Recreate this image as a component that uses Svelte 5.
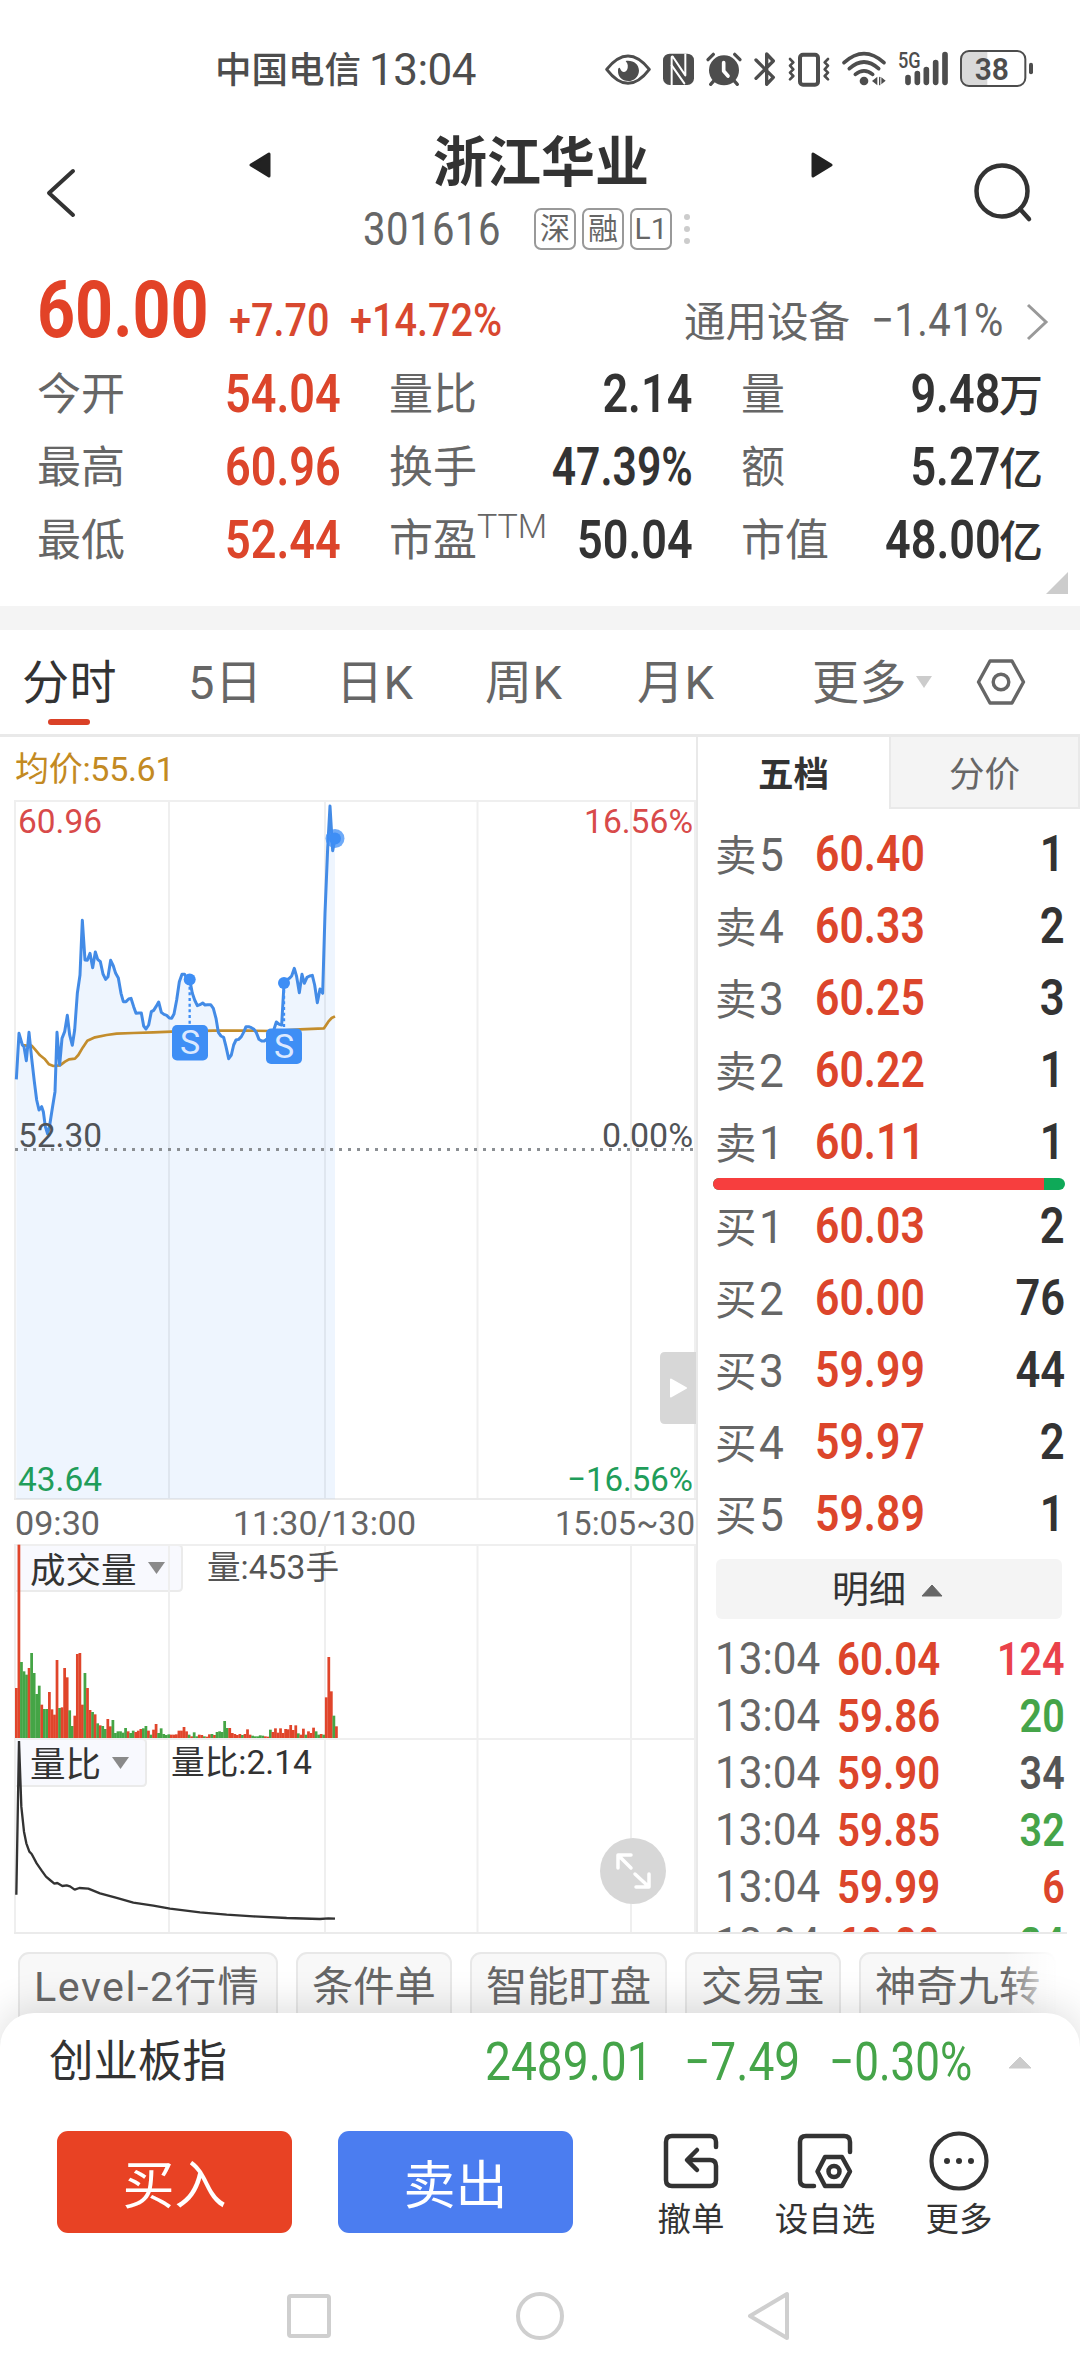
<script lang="ts">
	type Quote = { label: string; price: string; qty: string };

	const stats = [
		{ label: "今开", value: "54.04", unit: "", up: true },
		{ label: "量比", value: "2.14", unit: "", up: false },
		{ label: "量", value: "9.48", unit: "万", up: false },
		{ label: "最高", value: "60.96", unit: "", up: true },
		{ label: "换手", value: "47.39%", unit: "", up: false },
		{ label: "额", value: "5.27", unit: "亿", up: false },
		{ label: "最低", value: "52.44", unit: "", up: true },
		{ label: "市盈", sup: "TTM", value: "50.04", unit: "", up: false },
		{ label: "市值", value: "48.00", unit: "亿", up: false },
	];

	const asks: Quote[] = [
		{ label: "卖5", price: "60.40", qty: "1" },
		{ label: "卖4", price: "60.33", qty: "2" },
		{ label: "卖3", price: "60.25", qty: "3" },
		{ label: "卖2", price: "60.22", qty: "1" },
		{ label: "卖1", price: "60.11", qty: "1" },
	];

	const bids: Quote[] = [
		{ label: "买1", price: "60.03", qty: "2" },
		{ label: "买2", price: "60.00", qty: "76" },
		{ label: "买3", price: "59.99", qty: "44" },
		{ label: "买4", price: "59.97", qty: "2" },
		{ label: "买5", price: "59.89", qty: "1" },
	];

	const ticks = [
		{ price: "60.04", qty: "124", tone: "hot" },
		{ price: "59.86", qty: "20", tone: "down" },
		{ price: "59.90", qty: "34", tone: "flat" },
		{ price: "59.85", qty: "32", tone: "down" },
		{ price: "59.99", qty: "6", tone: "up" },
		{ price: "60.00", qty: "24", tone: "down" },
	];

	const askShare = 94;

	// one point per minute, three units per pixel
	const priceLine =
		"49,898 57,760 67,795 72,800 79,842 87,757 95,835 103,905 110,960 117,990 125,980 130,995 136,1040 143,1062 150,1030 157,985 165,935 171,757 179,855 186,775 194,755 202,706 209,765 217,796 224,750 232,640 240,585 247,421 255,540 262,541 270,520 278,563 286,516 293,538 301,545 309,582 317,598 324,590 332,541 340,558 347,580 355,594 363,640 370,665 378,665 386,657 393,655 401,680 408,700 416,699 424,699 431,738 438,747 446,735 454,695 461,691 468,680 476,666 484,697 492,703 500,706 508,714 515,715 522,702 530,660 538,605 546,583 554,583 562,598 569,598 577,640 584,660 592,677 600,674 608,669 615,675 623,674 632,674 640,685 648,715 655,757 663,768 671,772 678,800 686,836 694,825 701,795 708,780 716,778 724,770 732,755 738,740 746,740 754,743 762,748 769,758 777,778 785,783 793,783 800,778 808,776 815,770 823,745 829,726 838,733 845,735 852,612 860,600 868,595 875,588 883,565 890,590 898,638 906,583 913,610 921,592 929,588 937,586 944,615 952,668 960,627 968,640 975,400 983,205 990,78 998,212 1005,176";
	const avgLine =
		"67,795 80,797 95,797 105,808 120,826 135,838 147,853 160,858 180,856 195,845 207,838 225,836 235,825 248,803 262,782 285,772 320,765 350,761 400,759 460,757 515,755 640,752 740,752 820,753 900,748 972,745 985,725 995,714 1005,709";
	const ratioLine =
		"49,1244 57,783 64,980 72,1055 79,1090 88,1115 95,1122 110,1150 125,1172 138,1190 150,1200 163,1211 172,1209 187,1218 200,1216 210,1219 224,1229 238,1224 265,1226 300,1240 350,1254 400,1268 460,1277 510,1286 600,1297 680,1304 760,1309 860,1314 960,1317 985,1315 1005,1316";

	const volumes =
		"150r 580r 228g 200g 190g 210r 255g 195g 132g 157g 100r 87g 87g 138r 86r 70r 234r 90g 92r 210r 182r 83g 36g 67r 252r 255r 100r 195g 150r 84r 78g 71r 44g 38r 36g 27g 57r 35r 54g 15g 20g 20g 16g 30g 20r 15g 22g 18r 22r 27r 29g 36g 22r 10g 25r 42r 15g 29g 12g 9g 11g 10r 10r 11r 22r 22r 33r 20r 10g 5r 17g 5g 10r 9r 5g 4r 11r 12g 9r 18g 20g 18g 51g 30g 30r 15r 12r 9r 12r 9g 12r 26r 10r 7g 5g 5g 8g 7g 5r 4r 25g 18r 29r 16r 29r 15r 27r 26r 39r 24r 38r 14g 10r 28r 10g 20r 15r 31r 20g 10g 12r 10g 122r 243r 140r 67g 35r"
			.split(" ")
			.map((v) => ({ h: parseInt(v) / 3, up: v.endsWith("r") }));

	const columns = [169, 325, 477.5, 631];
	const chips = ["Level-2行情", "条件单", "智能盯盘", "交易宝", "神奇九转"];
	const badges = ["深", "融", "L1"];
</script>

{#snippet grid(height: number)}
	<g stroke="#efefef" stroke-width="2">
		{#each columns as x}
			<line x1={x} y1="0" x2={x} y2={height} />
		{/each}
		<line x1="15" y1="0" x2="15" y2={height} />
		<line x1="695" y1="0" x2="695" y2={height} />
		<line x1="14" y1="1" x2="696" y2="1" />
	</g>
{/snippet}

{#snippet quoteRow(q: Quote)}
	<div class="quote">
		<span class="q-label">{q.label[0]}<span class="n left">{q.label[1]}</span></span>
		<span class="q-price n left">{q.price}</span>
		<span class="q-qty n right">{q.qty}</span>
	</div>
{/snippet}

<div class="page">
	<div class="status">
		<span class="carrier">中国电信</span>
		<span class="clock">13:04</span>
		<svg width="480" height="80" viewBox="0 0 1440 240" fill="none" stroke="#4d4d4d" stroke-linecap="round" stroke-linejoin="round">
			<path d="M80 118 Q144 38 208 118 Q144 202 80 118Z" stroke-width="9" />
			<path d="M137 93 C160 90 176 102 177 122 C176 140 162 153 145 153 C126 153 113 139 114 122 C114 112 119 111 121 117 C126 130 140 128 143 114 C145 103 140 97 137 93Z" fill="#4d4d4d" stroke="none" />
			<rect x="249" y="71" width="93" height="94" rx="20" fill="#4d4d4d" stroke="none" />
			<path d="M275 165 V82 Q276 76 281 84 L316 136 V71" stroke="#fff" stroke-width="6" stroke-linecap="butt" />
			<path d="M275 106 L313 160" stroke="#fff" stroke-width="6" />
			<circle cx="432" cy="121" r="45" fill="#4d4d4d" stroke="none" />
			<path d="M384 89 L400 73 M464 73 L480 89 M402 152 L392 163 M462 152 L472 163" stroke-width="10" />
			<path d="M431 98 V123 L444 138" stroke="#fff" stroke-width="11" />
			<path d="M528 90 L580 142 L560 163 V72 L580 93 L528 145" stroke-width="10" />
			<rect x="660" y="74" width="54" height="90" rx="9" stroke-width="12" />
			<path d="M630 87 L640 97 L630 107 L640 118 L630 128 L640 138 L630 148 M744 87 L734 97 L744 107 L734 118 L744 128 L734 138 L744 148" stroke-width="8" />
			<path d="M792 98 Q852 44 912 98 M808 116 Q852 76 896 116 M826 133 Q852 112 878 133" stroke-width="11" />
			<circle cx="852" cy="153" r="13" fill="#4d4d4d" stroke="none" />
			<path d="M876 153 L892 140 V166Z M904 142 L917 152 L904 163Z" fill="#4d4d4d" stroke="none" />
			<path d="M899 142 V164" stroke-width="4" />
			<text x="954" y="113" class="g5" textLength="68" lengthAdjust="spacingAndGlyphs">5G</text>
			<path d="M984 143 V157 M1012 131 V157 M1039 119 V157 M1067 98 V157 M1095 74 V157" stroke-width="17" />
			<path d="M1222 62 V169 H1165 Q1144 169 1144 148 V83 Q1144 62 1165 62Z" fill="#d9d9d9" stroke="none" />
			<rect x="1143" y="63" width="193" height="105" rx="24" stroke-width="6" />
			<path d="M1353 104 V127" stroke-width="12" />
			<text x="1184" y="149" class="battery" textLength="103" lengthAdjust="spacingAndGlyphs">38</text>
		</svg>
	</div>

	<header>
		<svg class="back" width="34" height="52" viewBox="0 0 34 52"><path d="M29 4 L5 26 L29 48" fill="none" stroke="#333" stroke-width="4" stroke-linecap="round" stroke-linejoin="round" /></svg>
		<svg class="prev" width="22" height="28" viewBox="0 0 22 28"><path d="M2 14 L20 3 V25Z" fill="#222" stroke="#222" stroke-width="3" stroke-linejoin="round" /></svg>
		<div class="title">
			<h1>浙江华业</h1>
			<div class="code">
				<span class="code-num"><span class="n left">301616</span></span>
				{#each badges as b}
					<span class="badge">{b}</span>
				{/each}
				<span class="dots"><i></i><i></i><i></i></span>
			</div>
		</div>
		<svg class="next" width="22" height="28" viewBox="0 0 22 28"><path d="M20 14 L2 3 V25Z" fill="#222" stroke="#222" stroke-width="3" stroke-linejoin="round" /></svg>
		<svg class="search" width="60" height="62" viewBox="0 0 60 62" fill="none" stroke="#333" stroke-width="4.5" stroke-linecap="round"><circle cx="29" cy="29" r="25.5" /><path d="M47 47 L56 57" /></svg>
	</header>

	<section class="summary">
		<div class="headline">
			<span class="last n left">60.00</span>
			<span class="chg n left">+7.70</span>
			<span class="chg n left">+14.72%</span>
			<span class="sector">通用设备</span>
			<span class="sector-chg n left">−1.41%</span>
			<svg width="26" height="42" viewBox="0 0 26 42"><path d="M4 4 L22 21 L4 38" fill="none" stroke="#999" stroke-width="3" /></svg>
		</div>
		<div class="stats">
			{#each stats as s}
				<div class="stat">
					<span class="s-label">{s.label}{#if s.sup}<em>{s.sup}</em>{/if}</span>
					<span class="s-value" class:up={s.up}><span class="n right" class:pct={s.value.endsWith("%")}>{s.value}</span>{s.unit}</span>
				</div>
			{/each}
		</div>
		<svg class="corner" width="22" height="22" viewBox="0 0 22 22"><path d="M22 0 V22 H0Z" fill="#ccc" /></svg>
	</section>

	<nav class="tabs">
		<span class="tab active">分时</span>
		<span class="tab">5日</span>
		<span class="tab">日K</span>
		<span class="tab">周K</span>
		<span class="tab">月K</span>
		<span class="tab">更多</span>
		<svg width="16" height="12" viewBox="0 0 16 12"><path d="M0 0 H16 L8 12Z" fill="#ccc" /></svg>
		<svg class="hex" width="50" height="48" viewBox="0 0 50 48" fill="none" stroke="#666" stroke-width="3.4" stroke-linejoin="round"><path d="M14 3 H36 L47.5 24 L36 45 H14 L2.5 24Z" /><circle cx="25" cy="24" r="7.8" /></svg>
	</nav>

	<main>
		<div class="charts">
			<div class="avg">均价:55.61</div>
			<svg width="696" height="700" viewBox="0 0 696 700">
				{@render grid(700)}
				<line x1="14" y1="699" x2="696" y2="699" stroke="#ebebeb" stroke-width="2" />
				<g transform="translate(0 -20) scale(0.33333)" fill="none" stroke-linejoin="round">
					<polygon points="49,2156 {priceLine} 1005,2156" fill="#3f8cf0" fill-opacity="0.09" />
					<polyline points={avgLine} stroke="#c38d2d" stroke-width="8" />
					<polyline points={priceLine} stroke="#438be6" stroke-width="9" />
					<path d="M569 620 V735 M852 630 V745" stroke="#3e8ef5" stroke-width="7" stroke-dasharray="9 8" />
				</g>
				<g fill="#3e8ef5">
					<circle cx="335" cy="38.5" r="9.5" fill-opacity="0.75" />
					<circle cx="335" cy="38.5" r="6" />
					<circle cx="189.7" cy="179.5" r="6" />
					<circle cx="284" cy="183" r="6" />
					<rect x="172" y="225" width="36" height="35.5" rx="5" />
					<rect x="266" y="228.5" width="36" height="35.5" rx="5" />
				</g>
				<text x="190" y="254" class="mark">S</text>
				<text x="284" y="258" class="mark">S</text>
				<line x1="15" y1="349.5" x2="694" y2="349.5" stroke="#8b8f93" stroke-width="3" stroke-dasharray="3 6" />
				<g class="axis">
					<text x="18" y="33" fill="#d84a4a" textLength="84" lengthAdjust="spacingAndGlyphs">60.96</text>
					<text x="584" y="33" fill="#d84a4a" textLength="109" lengthAdjust="spacingAndGlyphs">16.56%</text>
					<text x="18" y="347" fill="#505357" textLength="84" lengthAdjust="spacingAndGlyphs">52.30</text>
					<text x="602" y="347" fill="#505357" textLength="91" lengthAdjust="spacingAndGlyphs">0.00%</text>
					<text x="18" y="691" fill="#1f9d5a" textLength="84" lengthAdjust="spacingAndGlyphs">43.64</text>
					<text x="567" y="691" fill="#1f9d5a" textLength="126" lengthAdjust="spacingAndGlyphs">−16.56%</text>
				</g>
				<path d="M696 552 V624 H665 Q660 624 660 619 V557 Q660 552 665 552Z" fill="#d7d7d7" />
				<path d="M671 579.5 L686 588 L671 596.5Z" fill="#fff" stroke="#fff" stroke-width="2" stroke-linejoin="round" />
			</svg>
			<svg width="696" height="44" viewBox="0 0 696 44" class="axis" fill="#666">
				<text x="15" y="35" textLength="85" lengthAdjust="spacingAndGlyphs">09:30</text>
				<text x="233" y="35" textLength="183" lengthAdjust="spacingAndGlyphs">11:30/13:00</text>
				<text x="555" y="35" textLength="140" lengthAdjust="spacingAndGlyphs">15:05~30</text>
			</svg>
			<svg width="696" height="194" viewBox="0 0 696 194">
				<path d="M15 1 H178 Q182 1 182 5 V43 Q182 47 178 47 H15Z" fill="#f8f9fe" stroke="#ebebeb" stroke-width="2" />
				{@render grid(194)}
				{#each volumes as v, i}
					<rect x={15 + i * 2.54} y={194 - v.h} width="2.75" height={v.h} fill={v.up ? "#e0452b" : "#45a546"} />
				{/each}
				<text x="30" y="39" class="ind">成交量</text>
				<path d="M148 18 H165 L156.5 30Z" fill="#8a8a8a" />
				<text x="207" y="35" class="ind-val" fill="#555" textLength="132" lengthAdjust="spacingAndGlyphs">量:453手</text>
			</svg>
			<svg width="696" height="196" viewBox="0 0 696 196">
				<path d="M15 1 H142 Q146 1 146 5 V44 Q146 48 142 48 H15Z" fill="#f8f9fe" stroke="#ebebeb" stroke-width="2" />
				{@render grid(196)}
				<line x1="14" y1="195" x2="696" y2="195" stroke="#ebebeb" stroke-width="2" />
				<g transform="translate(0 -258) scale(0.33333)">
					<polyline points={ratioLine} fill="none" stroke="#333" stroke-width="7" stroke-linejoin="bevel" />
				</g>
				<text x="30" y="39" class="ind">量比</text>
				<path d="M112 19 H129 L120.5 31Z" fill="#8a8a8a" />
				<text x="171" y="36" class="ind-val" fill="#333" textLength="141" lengthAdjust="spacingAndGlyphs">量比:2.14</text>
				<circle cx="633" cy="133" r="33" fill="#d7d7d7" />
				<path d="M618 130 V117 H631 M618.5 117.5 L631 130 M649 136 V149 H636 M648.5 148.5 L635 136" fill="none" stroke="#fff" stroke-width="3.5" stroke-linecap="round" stroke-linejoin="round" />
			</svg>
		</div>

		<aside>
			<div class="book-tabs">
				<span class="on">五档</span>
				<span class="off">分价</span>
			</div>
			<div class="book">
				{#each asks as q}
					{@render quoteRow(q)}
				{/each}
			</div>
			<div class="balance"><div class="balance-ask" style="width: {askShare}%"></div></div>
			<div class="book bids">
				{#each bids as q}
					{@render quoteRow(q)}
				{/each}
			</div>
			<div class="detail">
				明细
				<svg width="22" height="13" viewBox="0 0 22 13"><path d="M11 1 L21 12 H1Z" fill="#666" stroke="#666" stroke-linejoin="round" /></svg>
			</div>
			<div class="ticks">
				{#each ticks as t}
					<div class="tick">
						<span class="t-time n left">13:04</span>
						<span class="t-price n left">{t.price}</span>
						<span class="t-qty n right {t.tone}">{t.qty}</span>
					</div>
				{/each}
			</div>
		</aside>
	</main>

	<div class="chips">
		{#each chips as c}
			<span class="chip">{c}</span>
		{/each}
	</div>

	<footer>
		<div class="index">
			<span class="i-name">创业板指</span>
			<span class="n left">2489.01</span>
			<span class="n left">−7.49</span>
			<span class="n left pct">−0.30%</span>
			<svg width="24" height="13" viewBox="0 0 24 13"><path d="M12 1 L23 12 H1Z" fill="#ccc" stroke="#ccc" stroke-linejoin="round" /></svg>
		</div>
		<div class="actions">
			<button class="buy">买入</button>
			<button class="sell">卖出</button>
			<div class="tool cancel">
				<svg width="60" height="60" viewBox="0 0 60 60" fill="none" stroke="#333" stroke-width="4.5" stroke-linecap="round" stroke-linejoin="round">
					<path d="M55 16 V11 Q55 5 49 5 H11 Q5 5 5 11 V49 Q5 55 11 55 H49 Q55 55 55 49 V35 Q55 29 49 29 H27 M36 19 L26 29 L36 39" />
				</svg>
				<span>撤单</span>
			</div>
			<div class="tool">
				<svg width="60" height="60" viewBox="0 0 60 60" fill="none" stroke="#333" stroke-width="4.5" stroke-linecap="round" stroke-linejoin="round">
					<path d="M55 21 V11 Q55 5 49 5 H11 Q5 5 5 11 V49 Q5 55 11 55 H19" />
					<path d="M30 26 H47 L55 40.5 L47 55 H30 L22.5 40.5Z" />
					<circle cx="39" cy="40.5" r="5.5" />
				</svg>
				<span>设自选</span>
			</div>
			<div class="tool">
				<svg width="60" height="60" viewBox="0 0 60 60"><circle cx="30" cy="30" r="27.5" fill="none" stroke="#333" stroke-width="4.2" /><g fill="#333"><circle cx="18" cy="30" r="3" /><circle cx="30" cy="30" r="3" /><circle cx="42" cy="30" r="3" /></g></svg>
				<span>更多</span>
			</div>
		</div>
		<div class="sysnav">
			<svg width="504" height="56" viewBox="0 0 504 56" fill="none" stroke="#cfcfcf" stroke-width="4" stroke-linejoin="round">
				<rect x="3" y="8" width="40" height="40" rx="2" />
				<circle cx="254" cy="28" r="22" />
				<path d="M501 6 V50 L464 28Z" />
			</svg>
		</div>
	</footer>
</div>

<style>
	:global(body) {
		background: #fff;
	}

	.page {
		width: 1080px;
		height: 2376px;
		overflow: hidden;
		display: flex;
		flex-direction: column;
		background: #fff;
		color: #333;
		font-family: Roboto, "Noto Sans CJK SC", sans-serif;
		line-height: 1;
		white-space: nowrap;
	}

	svg {
		display: block;
		flex-shrink: 0;
	}

	/* condensed figures */
	.n {
		display: inline-block;
		transform: scaleX(0.87);
	}

	.left {
		transform-origin: left;
	}

	.right {
		transform-origin: right;
	}

	.status {
		height: 110px;
		display: flex;
		align-items: center;
		padding: 30px 0 0 215px;
		box-sizing: border-box;
		color: #4d4d4d;
	}

	.carrier {
		width: 154px;
		padding-top: 2px;
		font-size: 36.5px;
		font-weight: 500;
	}

	.clock {
		width: 211px;
		font-size: 44px;
		letter-spacing: -0.5px;
	}

	.g5 {
		font-size: 66px;
		font-weight: 500;
		fill: #4d4d4d;
		stroke: none;
	}

	.battery {
		font-size: 94px;
		font-weight: 600;
		fill: #4d4d4d;
		stroke: none;
	}

	header {
		height: 150px;
		display: flex;
		align-items: flex-start;
	}

	.back {
		margin: 57px 0 0 44px;
	}

	.prev {
		margin: 41px 0 0 171px;
	}

	.title {
		width: 540px;
		padding-top: 27px;
	}

	h1 {
		margin: 0;
		font-size: 54px;
		font-weight: 700;
		text-align: center;
	}

	.code {
		display: flex;
		align-items: center;
		height: 44px;
		margin-top: 16px;
		padding-left: 92px;
		color: #666;
	}

	.code-num {
		width: 171px;
		font-size: 46px;
		font-weight: 400;
		letter-spacing: 0.6px;
	}

	.badge {
		width: 42px;
		height: 42px;
		box-sizing: border-box;
		margin-right: 6px;
		border: 2px solid #999;
		border-radius: 7px;
		font-size: 30px;
		line-height: 38px;
		text-align: center;
	}

	.dots {
		display: flex;
		flex-direction: column;
		gap: 6px;
		margin-left: 6px;
	}

	.dots i {
		width: 6px;
		height: 6px;
		border-radius: 50%;
		background: #ccc;
	}

	.next {
		margin-top: 41px;
	}

	.search {
		margin: 52px 0 0 140px;
	}

	.summary {
		position: relative;
		height: 346px;
		border-bottom: 24px solid #f4f4f4;
	}

	.headline {
		height: 97px;
		box-sizing: border-box;
		display: grid;
		grid-template-columns: 192px 121px 334px 187px 153px 26px;
		align-items: end;
		padding: 0 0 14px 37px;
	}

	.last {
		font-size: 80px;
		font-weight: 700;
		color: #e24227;
		transform: translateY(7px) scaleX(0.83);
	}

	.chg {
		font-size: 46px;
		font-weight: 500;
		color: #d8482f;
		transform: scaleX(0.86);
	}

	.sector {
		font-size: 41.5px;
		color: #666;
	}

	.sector-chg {
		font-size: 46px;
		color: #666;
		letter-spacing: 0.5px;
	}

	.stats {
		display: grid;
		grid-template-columns: repeat(3, 302px);
		grid-auto-rows: 73px;
		column-gap: 50px;
		padding: 1px 0 0 37px;
	}

	.stat {
		display: flex;
		justify-content: space-between;
		align-items: center;
	}

	.s-label {
		font-size: 44px;
		color: #666;
	}

	.s-label em {
		font-style: normal;
		font-size: 34px;
		font-weight: 300;
		vertical-align: 18px;
		line-height: 0;
	}

	.s-value {
		font-size: 44px;
		font-weight: 500;
		color: #333;
	}

	.s-value .n {
		font-size: 53px;
		font-weight: 600;
		transform: translateX(1.5px) scaleX(0.85);
	}

	.s-value .pct {
		transform: translateX(1.5px) scaleX(0.805);
	}

	.up {
		color: #dc452b;
	}

	.corner {
		position: absolute;
		right: 12px;
		bottom: 12px;
	}

	.tabs {
		height: 107px;
		box-sizing: border-box;
		border-bottom: 3px solid #e9e9e9;
		display: grid;
		grid-template-columns: 166px 148px 149px 152px 175px 104px 60px 50px;
		align-items: center;
		padding-left: 22px;
		color: #666;
		font-size: 47px;
		letter-spacing: 0.5px;
	}

	.active {
		position: relative;
		color: #333;
	}

	.active::after {
		content: "";
		position: absolute;
		left: 26px;
		bottom: -19px;
		width: 42px;
		height: 6px;
		border-radius: 3px;
		background: #da4127;
	}

	main {
		display: flex;
		height: 1197px;
	}

	.charts {
		width: 696px;
	}

	.avg {
		height: 63px;
		line-height: 65px;
		padding-left: 15px;
		font-size: 34px;
		letter-spacing: -0.3px;
		color: #c38a22;
	}

	.mark {
		font-size: 34px;
		fill: #dbe9ff;
		text-anchor: middle;
	}

	.axis {
		font-size: 34px;
	}

	.ind {
		font-size: 35.5px;
		fill: #333;
	}

	.ind-val {
		font-size: 33px;
	}

	aside {
		width: 384px;
		box-sizing: border-box;
		border-left: 2px solid #e9e9e9;
	}

	.book-tabs {
		display: flex;
		height: 72px;
		font-size: 35.5px;
		line-height: 76px;
		text-align: center;
	}

	.on {
		width: 191px;
		font-weight: 700;
	}

	.off {
		flex: 1;
		box-sizing: border-box;
		border: 2px solid #e9e9e9;
		border-top: 0;
		background: #f4f4f4;
		color: #666;
	}

	.book {
		padding: 9px 15px 0 17px;
	}

	.quote {
		height: 72px;
		display: flex;
		align-items: center;
	}

	.q-label {
		width: 100px;
		font-size: 41.5px;
		color: #666;
	}

	.q-label .n {
		margin-left: 2px;
		font-size: 47px;
		transform: scaleX(0.94);
	}

	.q-price {
		font-size: 50px;
		font-weight: 600;
		color: #dc452b;
		transform: scaleX(0.855);
	}

	.q-qty {
		margin-left: auto;
		font-size: 50px;
		font-weight: 600;
	}

	.balance {
		height: 12px;
		margin: 0 15px;
		border-radius: 6px;
		overflow: hidden;
		background: #0fa958;
	}

	.balance-ask {
		height: 100%;
		background: #f73e3e;
	}

	.bids {
		padding-top: 0;
	}

	.detail {
		height: 60px;
		box-sizing: border-box;
		margin: 9px 18px 0;
		padding: 3px 3px 0 0;
		border-radius: 6px;
		background: #f4f4f4;
		display: flex;
		align-items: center;
		justify-content: center;
		gap: 15px;
		font-size: 37px;
	}

	.ticks {
		height: 302px;
		margin-right: 13px;
		padding: 11px 0 0 17px;
		overflow: hidden;
		border-bottom: 2px solid #e9e9e9;
	}

	.tick {
		display: flex;
		align-items: center;
		height: 57px;
		margin-right: 2px;
	}

	.t-time {
		width: 122px;
		font-size: 45px;
		color: #666;
		transform: scaleX(0.94);
	}

	.t-price {
		font-size: 47px;
		font-weight: 600;
		color: #dc452b;
		transform: scaleX(0.855);
	}

	.t-qty {
		margin-left: auto;
		font-size: 47px;
		font-weight: 600;
		transform: scaleX(0.84);
	}

	.hot {
		color: #ea424a;
	}

	.down {
		color: #45a449;
	}

	.flat {
		color: #555;
	}

	.chips {
		position: relative;
		height: 79px;
		flex-shrink: 0;
		display: flex;
		align-items: flex-start;
		gap: 18px;
		padding: 18px 0 0 18px;
		box-sizing: border-box;
	}

	.chips::after {
		content: "";
		position: absolute;
		right: 0;
		top: 0;
		width: 76px;
		height: 110px;
		background: linear-gradient(to right, rgba(255, 255, 255, 0), #fff 70%);
	}

	.chip {
		height: 90px;
		box-sizing: border-box;
		padding: 0 14px;
		border: 2px solid #e8e8e8;
		border-radius: 11px;
		background: #f8f8f8;
		color: #666;
		font-size: 41.3px;
		line-height: 67px;
	}

	.chip:first-child {
		width: 260px;
		letter-spacing: 1.5px;
	}

	footer {
		position: relative;
		flex: 1;
		border-radius: 34px 34px 0 0;
		background: #fff;
		box-shadow: 0 -4px 40px rgba(0, 0, 0, 0.14);
	}

	.index {
		height: 98px;
		display: grid;
		grid-template-columns: 436px 199px 145px 179px 24px;
		align-items: center;
		padding-left: 49px;
		font-size: 53px;
		color: #45a449;
	}

	.index .pct {
		transform: scaleX(0.83);
	}

	.i-name {
		font-size: 44.5px;
		color: #333;
	}

	.actions {
		display: flex;
		padding: 20px 0 0 57px;
	}

	button {
		width: 235px;
		height: 102px;
		margin-right: 46px;
		padding: 0 0 2px;
		border: 0;
		border-radius: 11px;
		color: #fff;
		font-family: inherit;
		font-size: 52px;
	}

	.buy {
		background: #e84224;
	}

	.sell {
		background: #4b7df0;
	}

	.tool {
		display: flex;
		flex-direction: column;
		align-items: center;
		gap: 12px;
		width: 134px;
		font-size: 33.5px;
	}

	.cancel {
		margin-left: 5px;
	}

	.sysnav {
		display: flex;
		padding: 51px 0 0 286px;
	}
</style>
